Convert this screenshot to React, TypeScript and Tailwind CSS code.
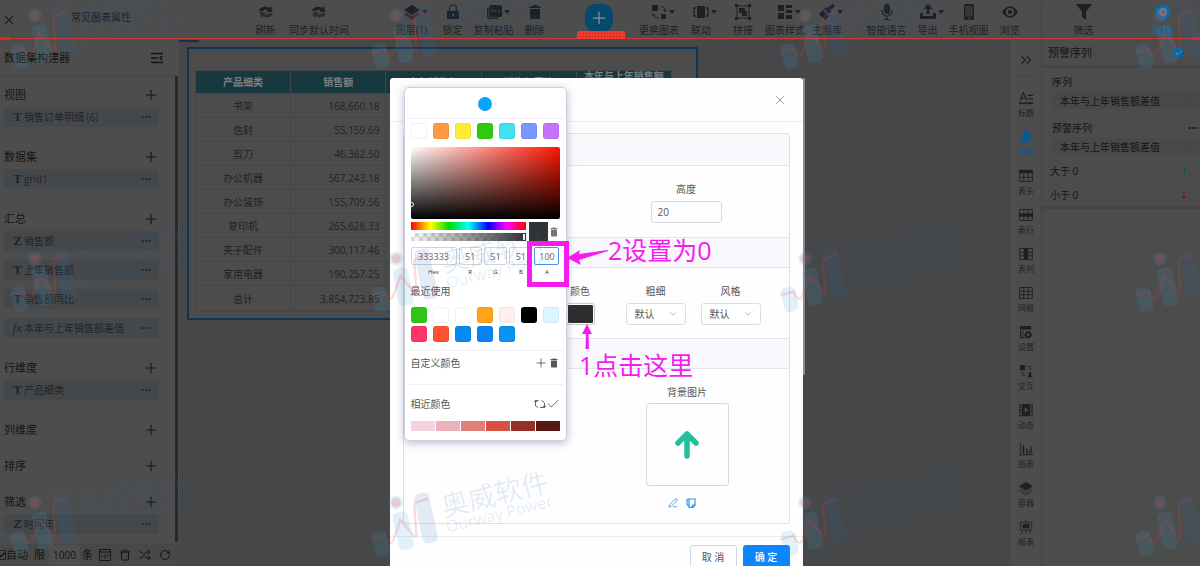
import { useState, type ReactNode } from "react";
import { Check, ChevronDown, ChevronsRight, PenLine, Plus, RotateCw, Shuffle, Trash, X } from "lucide-react";
import { MdDelete } from "react-icons/md";

type IconName =
  | "sync" | "layers" | "lock" | "copy" | "trash" | "swap" | "link" | "join" | "grid" | "brush"
  | "mic" | "export" | "phone" | "eye" | "filter" | "hex"
  | "title" | "bell" | "thead" | "trow" | "tcol" | "mesh" | "settings" | "interact" | "film" | "chart" | "stack" | "report";

// all glyphs are drawn on a 16 x 16 grid with currentColor
const GLYPHS: Record<IconName, ReactNode> = {
  sync: <><path d="M1 7a6 5 0 0 1 10-3l2-2 1.500 6H8l2-2a4 3 0 0 0-5 1z" /><path d="M15 9a6 5 0 0 1-10 3l-2 2L1.500 8H8l-2 2a4 3 0 0 0 5-1z" opacity=".7" /></>,
  layers: <><path d="M8 1l8 5-8 5-8-5z" /><path d="M2.500 9L8 12.500 13.500 9 16 10.500 8 15.500 0 10.500z" opacity=".7" /></>,
  lock: <><path d="M4.500 7V4.500a3.500 3.500 0 0 1 7 0V7" fill="none" stroke="currentColor" strokeWidth="1.200" /><path fillRule="evenodd" d="M2 7h12v8H2zM7.200 9.500v3h1.600v-3z" /></>,
  copy: <><path d="M1 4v9a2 2 0 0 0 2 2h9v-1.500H4A1.500 1.500 0 0 1 2.500 12V4z" /><path fillRule="evenodd" d="M5 1h9a2 2 0 0 1 2 2v8a2 2 0 0 1-2 2H5a2 2 0 0 1-2-2V3a2 2 0 0 1 2-2zm.5 5v1.500H7V6zm3.200 0v1.500h1.600V6zm3.300 0v1.500h1.500V6z" /></>,
  trash: <path d="M5.500 1h5v1.500H14V4H2V2.500h3.500zM3 5h10v10H3z" />,
  swap: <><path d="M1 1h6v6H1zM10 10h5v5h-5z" /><path d="M10 2.500c3 0 4 1.500 4 5M12.500 6L14 8l1.500-2M7.500 14C4 14 2.500 13 2.500 10M1 11.500L2.500 9.500 4 11.500" fill="none" stroke="currentColor" /></>,
  link: <><path d="M4 2h8v12H4z" /><path d="M3 4H1v8h2M13 4h2v8h-2" fill="none" stroke="currentColor" strokeWidth="1.300" /></>,
  join: <><path d="M2 2h12v12H2z" fill="none" stroke="currentColor" /><path d="M0 0h3v3H0zM13 0h3v3h-3zM0 13h3v3H0zM13 13h3v3h-3zM4 4h6v5H4zM7 7h5v5H7z" /></>,
  grid: <path d="M1 1h6v6H1zM1 9h6v6H1zM9 1h6v3H9zM9 6h6v3H9zM9 11h6v4H9z" />,
  brush: <path d="M14 0l2 2-5 5 1 1-2 2-5-5 2-2 1 1zM4 6l6 6-4 4-6-6z" />,
  mic: <><rect x="5" y="0" width="6" height="10" rx="3" /><path d="M3 6c0 8 10 8 10 0M8 12v3M5 15.500h6" fill="none" stroke="currentColor" strokeWidth="1.200" /></>,
  export: <><path d="M8 0l5 5H9.500v5h-3V5H3z" /><path d="M0 9h3v3h10V9h3v6H0z" /></>,
  phone: <><path fillRule="evenodd" d="M4.500 0h7A1.500 1.500 0 0 1 13 1.500v13a1.500 1.500 0 0 1-1.500 1.500h-7A1.500 1.500 0 0 1 3 14.500v-13A1.500 1.500 0 0 1 4.500 0zM4.500 2v10.500h7V2zM7 14v1h2v-1z" /><path d="M4.500 2h7v10.500h-7z" opacity=".5" /></>,
  eye: <path fillRule="evenodd" d="M0 8c4-7.500 12-7.500 16 0-4 7.500-12 7.500-16 0zm8-4a4 4 0 1 0 0 8 4 4 0 0 0 0-8zm0 1.800a2.200 2.200 0 1 1 0 4.400 2.200 2.200 0 0 1 0-4.400z" />,
  filter: <path d="M0 0h16l-6 8v8l-4-3V8z" />,
  hex: <><path d="M8 0l7 4v8l-7 4-7-4V4z" /><circle cx="8" cy="8" r="4" fill="#6d7f8c" /><circle cx="8" cy="8" r="2" fill="#8a4f56" /></>,
  title: <><path d="M1 11L5 2l4 9M2.500 8h5M10 5h6M10 9h6" fill="none" stroke="currentColor" strokeWidth="1.400" /><path d="M0 13h16v2H0z" /></>,
  bell: <><path d="M8 0l1 1.500c2 .5 3 2.500 3 5 0 3 1 4.500 3 6H1c2-1.500 3-3 3-6 0-2.500 1-4.500 3-5zM6.500 13.500h3c0 2-3 2-3 0z" /><path d="M2 2.500L.8 5M14 2.500L15.200 5" fill="none" stroke="currentColor" strokeWidth=".7" /></>,
  thead: <><path d="M0 1h16v4H0z" /><path d="M.7 5v9.300h14.600V5M5.500 5v9M10.500 5v9M1 9.500h14" fill="none" stroke="currentColor" strokeWidth="1" /></>,
  trow: <><path d="M0 6h16v4H0z" /><path d="M.7 1.700h14.600v12.600H.7zM5.500 1v13M10.500 1v13" fill="none" stroke="currentColor" strokeWidth="1" /></>,
  tcol: <><path d="M5.500 1h5v14h-5z" /><path d="M.7 1.700h14.600v12.600H.7zM1 6h14M1 10h14" fill="none" stroke="currentColor" strokeWidth="1" /></>,
  mesh: <path d="M.7 1.700h14.600v12.600H.7zM5.500 1v13M10.500 1v13M1 6h14M1 10h14" fill="none" stroke="currentColor" strokeWidth="1" />,
  settings: <><path d="M1 1h13v4H1zM1 6h1.500v9H1zM4 6h1v8h2v1H2v-1h2z" /><path fillRule="evenodd" d="M8.500 7h4l2.500 4-2.500 4h-4L6 11zm2 2.500a1.500 1.500 0 1 0 0 3 1.500 1.500 0 0 0 0-3z" /></>,
  interact: <><path d="M1 1h6v6H1zM12.500 9a2 2 0 0 1 1 3.500q2 .5 2 2.500h-6q0-2 2-2.500a2 2 0 0 1 1-3.500z" /><path d="M9 3h4v4M11.500 5.500L13 7l1.500-1.500M7.500 13h-4V9.500M2 11l1.500-1.500L5 11" fill="none" stroke="currentColor" strokeWidth=".8" /></>,
  film: <><path fillRule="evenodd" d="M3 1h10v14H3zM6.500 5v6l4.500-3z" /><path d="M1 1v14M15 1v14" fill="none" stroke="currentColor" strokeWidth="2" strokeDasharray="2 1" /></>,
  chart: <path d="M1 0h1v14h14v1H1v1H0v-1h1zM4 4h2v9H4zM8 7h1.500v6H8zM11 9h1v4h-1zM13 5h1.500v8H13z" />,
  stack: <><path d="M8 1l8 5-8 5-8-5z" /><path d="M1 9l7 4.500L15 9M1 11.500L8 16l7-4.500" fill="none" stroke="currentColor" strokeWidth=".8" /></>,
  report: <><path d="M1.500 2.500h13v9h-13zM4 12l-1 4M12 12l1 4M8 12v4M8 0v2" fill="none" stroke="currentColor" /><path d="M4 4.500h8v5H4z" /></>,
};

function Glyph({ name, className }: { name: IconName; className: string }) {
  return <svg viewBox="0 0 16 16" fill="currentColor" className={className} aria-hidden="true">{GLYPHS[name]}</svg>;
}

interface Tool { label: string; icon: IconName; caret?: boolean; active?: boolean }

const FILE_TOOLS: Tool[] = [{ label: "刷新", icon: "sync" }, { label: "同步默认时间", icon: "sync" }];
const EDIT_TOOLS: Tool[] = [
  { label: "图层(1)", icon: "layers", caret: true },
  { label: "锁定", icon: "lock" },
  { label: "复制粘贴", icon: "copy", caret: true },
  { label: "删除", icon: "trash" },
];
const CHART_TOOLS: Tool[] = [
  { label: "更换图表", icon: "swap", caret: true },
  { label: "联动", icon: "link", caret: true },
  { label: "拼接", icon: "join" },
  { label: "图表样式", icon: "grid", caret: true },
  { label: "主题库", icon: "brush", caret: true },
];
const VIEW_TOOLS: Tool[] = [
  { label: "智能语言", icon: "mic" },
  { label: "导出", icon: "export", caret: true },
  { label: "手机视图", icon: "phone" },
  { label: "浏览", icon: "eye" },
];

const SECTIONS: { title: string; items: { mark: string; name: string }[] }[] = [
  { title: "视图", items: [{ mark: "T", name: "销售订单明细 (6)" }] },
  { title: "数据集", items: [{ mark: "T", name: "grid1" }] },
  {
    title: "汇总",
    items: [
      { mark: "Z", name: "销售额" },
      { mark: "T", name: "上年销售额" },
      { mark: "T", name: "销售额同比" },
      { mark: "fx", name: "本年与上年销售额差值" },
    ],
  },
  { title: "行维度", items: [{ mark: "T", name: "产品细类" }] },
  { title: "列维度", items: [] },
  { title: "排序", items: [] },
  { title: "筛选", items: [{ mark: "Z", name: "时间年" }] },
];

const ROWS = [
  ["书架", "168,660.18"],
  ["信封", "55,159.69"],
  ["剪刀", "46,362.50"],
  ["办公机器", "567,243.18"],
  ["办公装饰", "155,709.56"],
  ["复印机", "265,628.33"],
  ["夹子配件", "300,117.46"],
  ["家用电器", "190,257.25"],
];

const RAIL: { label: string; icon: IconName }[] = [
  { label: "标题", icon: "title" },
  { label: "预警", icon: "bell" },
  { label: "表头", icon: "thead" },
  { label: "表行", icon: "trow" },
  { label: "表列", icon: "tcol" },
  { label: "网格", icon: "mesh" },
  { label: "设置", icon: "settings" },
  { label: "交互", icon: "interact" },
  { label: "动态", icon: "film" },
  { label: "图表", icon: "chart" },
  { label: "容器", icon: "stack" },
  { label: "报表", icon: "report" },
];

const PRESETS = ["#ffffff", "#ff9a43", "#ffeb33", "#30c90e", "#43e0f0", "#7a95ff", "#c573ff"];
const RECENT = ["#30c516", "#ffffff", "#ffffff", "#ffa31a", "#fff1ec", "#000000", "#dcf5ff", "#ff3366", "#ff5230", "#078af0", "#0784f4", "#0894f0"];
const SIMILAR = ["#f3d3e2", "#ebb2bc", "#e07f79", "#d84f45", "#963129", "#561a15"];

function ToolButton({ tool, width = "w-[41px]" }: { tool: Tool; width?: string }) {
  return (
    <button className={`flex flex-col items-center gap-1 whitespace-nowrap ${width} ${tool.active ? "text-[#036db5]" : "text-[#1d2126]"}`}>
      <span className="relative">
        <Glyph name={tool.icon} className="size-4" />
        {tool.caret && <span className="absolute -right-2 top-1.5 border-x-[3px] border-t-4 border-x-transparent border-t-current" />}
      </span>
      <span className="text-[10px] leading-3">{tool.label}</span>
    </button>
  );
}

function ToolGroup({ tools, className, width }: { tools: Tool[]; className: string; width?: string }) {
  return <div className={`flex shrink-0 ${className}`}>{tools.map((t) => <ToolButton key={t.label} tool={t} width={width} />)}</div>;
}

function Toolbar() {
  return (
    <header className="relative flex h-10 shrink-0 items-start bg-[#4d4d4d] pt-1 text-[#1d2126]">
      <button aria-label="关闭" className="ml-px mt-2"><X className="size-4" strokeWidth={1.800} /></button>
      <span className="ml-[54px] mt-1.5 w-[174px] text-[10px] leading-3.5">常见图表属性</span>
      <div className="flex w-[104px] shrink-0 justify-between">
        <ToolButton tool={FILE_TOOLS[0]} />
        <ToolButton tool={FILE_TOOLS[1]} width="w-[60px]" />
      </div>
      <ToolGroup tools={EDIT_TOOLS} className="ml-[42px]" />
      <button aria-label="添加" className="ml-[30px] flex size-7 shrink-0 items-center justify-center rounded-[10px] bg-[#06496e] text-[#858e94]">
        <Plus className="size-5" strokeWidth={1.500} />
      </button>
      <ToolGroup tools={CHART_TOOLS} className="ml-[25px]" width="w-[42px]" />
      <ToolGroup tools={VIEW_TOOLS} className="ml-[18px]" />
      <div className="ml-auto flex shrink-0 border-l border-[#414141]">
        <ToolButton tool={{ label: "筛选", icon: "filter" }} width="w-[83px]" />
        <ToolButton tool={{ label: "属性", icon: "hex", active: true }} width="w-[75px]" />
      </div>
      <div className="absolute inset-x-0 bottom-0 flex h-[3px] items-center justify-between">
        <span className="h-[3px] w-2.5 bg-[#f5220b]" />
        <span className="h-px flex-1 bg-[#c93a33]" />
        <span className="h-[3px] w-2 bg-[#f5220b]" />
      </div>
      <svg viewBox="0 0 48 8" className="absolute bottom-px left-1/2 -ml-[23px] h-2 w-12" aria-hidden="true">
        <rect width="48" height="10" rx="2" fill="#ee3b30" />
        <path d="M3 2.500h42M3 5.500h42" stroke="#b32620" strokeDasharray="1 2" />
      </svg>
    </header>
  );
}

function Builder() {
  return (
    <aside className="flex w-[179px] shrink-0 flex-col bg-[#4d4d4d] text-[#151515]">
      <div className="flex h-9 shrink-0 items-center justify-between border-b border-[#454545] pl-1 pr-4">
        <h2 className="text-[11px] leading-4">数据集构建器</h2>
        <button aria-label="收起">
          <svg viewBox="0 0 12 12" className="size-3" fill="none" stroke="currentColor" strokeWidth="1.400">
            <path d="M0 1.500h12M0 6h6.500M0 10.500h12M11.500 3.800L9 6l2.500 2.300" />
          </svg>
        </button>
      </div>
      <div className="mr-px flex-1 border-r-[3px] border-[#292929] pl-1 pr-4 pt-1.5">
        {SECTIONS.map((s) => (
          <section key={s.title} className="pb-[11px] last:pb-0">
            <div className="flex h-[25px] items-center justify-between">
              <h3 className="text-[11px] leading-4">{s.title}</h3>
              <button aria-label={`添加${s.title}`}><Plus className="size-4" strokeWidth={1.600} /></button>
            </div>
            {s.items.length > 0 && (
              <ul className="flex flex-col gap-[9px] pb-1.5">
                {s.items.map((i) => (
                  <li key={i.name} className="flex h-5 items-center rounded-xs bg-[#45484b] pr-2 text-[10px] leading-4 text-[#20242a]">
                    <span className={`mr-0.5 w-[18px] text-right font-["Liberation_Serif",serif] text-[13px] ${i.mark === "fx" ? "italic" : "font-bold"}`}>{i.mark}</span>
                    <span className="flex-1 whitespace-nowrap">{i.name}</span>
                    <button aria-label={`${i.name}更多`} className="text-xs font-bold">···</button>
                  </li>
                ))}
              </ul>
            )}
          </section>
        ))}
      </div>
      <div className="mt-0.5 flex h-[22px] shrink-0 items-center bg-[#484848] text-[11px] leading-4">
        <label className="flex items-center whitespace-nowrap">
          <input type="checkbox" defaultChecked className="-ml-1 size-2.5 appearance-none border border-[#222]" />
          <Check className="-ml-2 size-2" strokeWidth={4} />自动
        </label>
        <label htmlFor="limit" className="ml-1.5">限</label>
        <input id="limit" defaultValue="1000" className="ml-1 h-5 w-[31px] bg-[#4f4f4f] text-center text-[10px]" />
        <span className="ml-0.5">条</span>
        <div className="ml-1.5 flex flex-1 items-center justify-between pr-2">
          <button aria-label="代码">
            <svg viewBox="0 0 12 12" className="size-3" fill="none" stroke="currentColor"><path d="M.5.5h11v11H.5zM.5 3h11M4 5.500L2.500 7 4 8.500M8 5.500L9.500 7 8 8.500M6.500 5l-1 4.500" /></svg>
          </button>
          <button aria-label="清空"><Trash className="size-3" /></button>
          <button aria-label="随机"><Shuffle className="size-3" /></button>
          <button aria-label="重做"><RotateCw className="size-3" /></button>
        </div>
      </div>
    </aside>
  );
}

function ReportTable() {
  const cell = "border border-[#444546] p-0";
  return (
    <main className="min-w-0 flex-1 bg-[#464749]">
      <div className="h-0.5 w-5 bg-[#0a3354]" />
      <div className="ml-2 mt-[5px] w-[511px] border-2 border-[#0a3556] bg-[#4d4c4c] pb-1.5 pl-1.5 pr-6 pt-[21px]">
        <table className="w-full table-fixed border-collapse text-[10px] leading-3 text-[#222]">
          <thead>
            <tr className="bg-[#17383f] leading-[11px] text-[#788084]">
              <th className={cell}>产品细类</th>
              <th className={cell}>销售额</th>
              <th className={cell}>上年销售额</th>
              <th className={cell}>销售额同比</th>
              <th className={cell}>本年与上年销售额<br />差值</th>
            </tr>
          </thead>
          <tbody>
            {ROWS.map(([name, value]) => (
              <tr key={name} className="h-6">
                <td className={`${cell} text-center`}>{name}</td>
                <td className={cell}><div className="pr-1.5 text-right">{value}</div></td>
                <td className={cell} /><td className={cell} /><td className={cell} />
              </tr>
            ))}
            <tr className="h-[26px]">
              <td className={`${cell} text-center`}>总计</td>
              <td className={cell}><div className="pr-1.5 text-right">3,854,723.85</div></td>
              <td className={cell} /><td className={cell} /><td className={cell} />
            </tr>
          </tbody>
        </table>
      </div>
    </main>
  );
}

function Rail() {
  return (
    <nav className="flex w-[30px] shrink-0 flex-col items-center bg-[#4d4d4d] text-[#1d2126]">
      <button aria-label="展开" className="flex h-[37px] w-5 items-center justify-center border-b border-[#444] pt-1"><ChevronsRight className="size-[18px]" strokeWidth={1.500} /></button>
      <div className="pt-3.5">
        {RAIL.map((r) => (
          <button key={r.label} className={`flex h-[39px] flex-col items-center gap-0.5 ${r.icon === "bell" ? "text-[#045a94]" : ""}`}>
            <Glyph name={r.icon} className="size-3.5" />
            <span className="text-[8px] leading-3">{r.label}</span>
          </button>
        ))}
      </div>
    </nav>
  );
}

function SeriesSelect({ id }: { id: string }) {
  return (
    <div className="relative">
      <select id={id} className="h-[17px] w-full appearance-none bg-[#494949] pl-2 text-[10px] leading-4">
        <option>本年与上年销售额差值</option>
      </select>
      <ChevronDown className="pointer-events-none absolute right-2 top-1 size-2.5 text-[#353535]" strokeWidth={1.500} />
    </div>
  );
}

function Properties() {
  return (
    <aside className="w-[159px] shrink-0 border-l border-[#424242] bg-[#4c4c4c] text-[#151515]">
      <div className="flex h-7 items-center border-b-[3px] border-[#454545] pl-1.5">
        <label htmlFor="alert-on" className="flex-1 text-[11px] leading-4">预警序列</label>
        <span className="relative flex">
          <input id="alert-on" type="checkbox" defaultChecked className="size-2.5 appearance-none rounded-xs bg-[#04639f]" />
          <Check className="pointer-events-none absolute left-px top-px size-2 text-[#8d979d]" strokeWidth={3} />
        </span>
        <ChevronDown className="ml-1 size-3 text-[#04639f]" />
      </div>
      <div className="border-b-[3px] border-[#444] pb-[3px] text-[10px] leading-4">
        <div className="pl-2.5 pt-1.5">
          <label htmlFor="series" className="block pb-0.5">序列</label>
          <SeriesSelect id="series" />
        </div>
        <div className="pl-2.5 pt-[11px]">
          <div className="flex justify-between pb-0.5 pr-0.5">
            <label htmlFor="alert-series">预警序列</label>
            <button aria-label="更多" className="text-xs font-bold leading-4">···</button>
          </div>
          <SeriesSelect id="alert-series" />
        </div>
        <div className="flex justify-between pl-2 pr-3 pt-2"><span>大于 0</span><span className="text-[8px] font-bold text-[#035c30]">↑</span></div>
        <div className="flex justify-between pl-2 pr-3 pt-2"><span>小于 0</span><span className="text-[8px] font-bold text-[#6b0f1a]">↓</span></div>
      </div>
    </aside>
  );
}

function Swatches({ colors }: { colors: string[] }) {
  return (
    <div className="grid grid-cols-7 gap-x-1.5 gap-y-[3px]">
      {colors.map((c, i) => (
        <button key={i} aria-label={c} className="h-4 rounded-[3px] border border-black/5" style={{ backgroundColor: c }} />
      ))}
    </div>
  );
}

function ColorPicker() {
  const [alpha, setAlpha] = useState("100");
  const field = "h-[18px] w-full rounded-xs border border-[#d2d2d8] bg-transparent text-center text-[9px] text-[#666]";
  const caption = "block text-center text-[6px] leading-[14px] text-[#333]";
  return (
    <div className="absolute left-3.5 top-[9px] w-[163px] rounded-[5px] border border-[#cfcfdb] bg-white px-1.5 text-[10px] leading-4 text-[#555] shadow-[0_2px_8px_rgba(60,60,110,0.35)]">
      <div className="-mx-1 flex h-[31px] items-center justify-center border-b border-[#f0f0f6]">
        <span className="mt-0.5 size-3.5 rounded-full bg-[#07a5ff]" />
      </div>
      <div className="pt-1"><Swatches colors={PRESETS} /></div>
      <div className="relative mt-2 h-[72px] rounded-xs bg-[linear-gradient(to_top,#000,transparent),linear-gradient(to_right,#fff,#ff1500)]">
        <span className="absolute -left-0.5 bottom-3 size-[5px] rounded-full border border-white" />
      </div>
      <div className="mt-[3px] flex items-center">
        <div className="flex flex-1 flex-col gap-[3px]">
          <div className="h-2 bg-[linear-gradient(to_right,#f00,#ff0_17%,#0d0_33%,#0ff_50%,#00f_67%,#f0f_83%,#f00)]" />
          <div className="relative h-2 bg-[linear-gradient(to_right,transparent,#333),repeating-conic-gradient(#ddd_0_25%,#fff_0_50%)] bg-[length:100%_100%,8px_8px]">
            <span className="absolute right-0 top-0 h-2 w-1 border border-[#333] bg-white" />
          </div>
        </div>
        <span className="ml-[3px] size-[19px] bg-[#303234]" />
        <button aria-label="清除颜色"><MdDelete className="size-3 text-[#73777c]" /></button>
      </div>
      <div className="mt-1.5 flex gap-0.5">
        <label className="w-[46px]"><input defaultValue="333333" className={field} /><span className={caption}>Hex</span></label>
        <label className="flex-1"><input defaultValue="51" className={field} /><span className={caption}>R</span></label>
        <label className="flex-1"><input defaultValue="51" className={field} /><span className={caption}>G</span></label>
        <label className="flex-1"><input defaultValue="51" className={field} /><span className={caption}>B</span></label>
        <label className="w-[25px]">
          <input value={alpha} onChange={(e) => setAlpha(e.target.value)} className="h-[18px] w-full rounded-xs border border-[#4d90e8] bg-transparent text-center text-[9px] text-[#666]" />
          <span className={caption}>A</span>
        </label>
      </div>
      <h4 className="mt-1 pb-2">最近使用</h4>
      <Swatches colors={RECENT} />
      <div className="-mx-1 mt-2 flex h-[35px] items-start border-y border-[#f0f0f6] px-1 pt-1">
        <h4 className="flex-1">自定义颜色</h4>
        <button aria-label="添加颜色"><Plus className="mt-px size-3.5" strokeWidth={1.500} /></button>
        <button aria-label="删除颜色"><MdDelete className="mt-0.5 size-3 text-[#555]" /></button>
      </div>
      <div className="flex items-center pt-[11px]">
        <h4 className="flex-1">相近颜色</h4>
        <button aria-label="换一批">
          <svg viewBox="0 0 12 12" className="size-3" fill="none" stroke="currentColor" strokeWidth=".9"><path d="M4.500 2.500H1.500v5.500l2.500 1.500M6 9.500h4.500V5L7.500 2.500M0 4.200L1.500 2.500 3.200 4.200M9 7.800l1.500 1.700L12 7.800" /></svg>
        </button>
        <button aria-label="应用"><Check className="size-3.5" strokeWidth={1.500} /></button>
      </div>
      <div className="mb-[9px] mt-[9px] flex h-2.5 gap-px">
        {SIMILAR.map((c) => <button key={c} aria-label={c} className="flex-1" style={{ backgroundColor: c }} />)}
      </div>
    </div>
  );
}

function LineSelect({ label }: { label: string }) {
  return (
    <label className="relative flex w-[60px] flex-col items-center gap-1 self-start">
      {label}
      <select className="h-[22px] w-full appearance-none rounded-[3px] border border-[#dcdce6] bg-white pl-2 text-[10px]">
        <option>默认</option>
      </select>
      <ChevronDown className="pointer-events-none absolute bottom-1.5 right-2 size-2.5 text-[#888]" strokeWidth={1.500} />
    </label>
  );
}

function StyleDialog() {
  const band = "border-y border-[#e4e4ef] bg-[#f8f8fd]";
  return (
    <div className="absolute inset-0 flex items-start justify-center overflow-hidden pr-2 pt-[78px]">
      <div role="dialog" aria-label="样式设置" className="relative w-[413px] rounded-t-[3px] bg-[#fefeff] text-[10px] leading-4 text-[#555]">
        <span className="absolute -right-0.5 top-0 h-[297px] w-0.5 rounded-full bg-[#8a8b8d]" />
        <div className="flex h-11 items-center justify-end border-b border-[#ececf4] pr-4">
          <button aria-label="关闭"><X className="size-3.5 text-[#888]" strokeWidth={1.500} /></button>
        </div>
        <div className="mx-[13px] mt-[11px] overflow-hidden rounded-[3px] border border-[#dedeeb]">
          <div className="h-8 border-b border-[#e4e4ef] bg-[#f8f8fd]" />
          <div className="flex h-[71px] justify-end pr-[67px] pt-[15px]">
            <label className="flex w-[71px] flex-col items-center gap-1">
              高度
              <input defaultValue="20" className="h-[22px] w-full rounded-[3px] border border-[#dcdce6] px-1.5 text-[10px]" />
            </label>
          </div>
          <div className={`h-[31px] ${band}`} />
          <div className="flex h-[70px] justify-end gap-[15px] pr-7 pt-[15px]">
            <div className="mr-4 flex flex-col items-center gap-1">
              颜色
              <button aria-label="颜色" className="h-[22px] w-[29px] rounded-[3px] border border-[#c8c8cc] bg-[#2c2d2e] bg-clip-content p-px" />
            </div>
            <LineSelect label="粗细" />
            <LineSelect label="风格" />
          </div>
          <div className={`h-[31px] ${band}`} />
          <div className="flex h-[154px] justify-end pr-[60px] pt-[15px]">
            <div className="flex flex-col items-center">
              背景图片
              <button aria-label="背景图片" className="mt-[3px] flex size-[83px] items-center justify-center rounded-[3px] border border-[#d6d6e4]">
                <svg viewBox="0 0 24 28" className="h-7 w-6" fill="none" stroke="#22bf9d" strokeWidth="5.500" strokeLinecap="round" strokeLinejoin="round"><path d="M12 25V4M3 12l9-9 9 9" /></svg>
              </button>
              <div className="mt-3 flex gap-2 self-start pl-[22px] text-[#3195ef]">
                <button aria-label="编辑"><PenLine className="size-2.5" /></button>
                <button aria-label="复制">
                  <svg viewBox="0 0 10 10" className="size-2.5" fill="none" stroke="currentColor" strokeWidth="1.200"><path d="M3 1h6v6.500L7 9.400H3zM1 1v6M1 1h2M3 7.200H1M6.500 9.200V7H9" /></svg>
                </button>
              </div>
            </div>
          </div>
        </div>
        <div className="mt-3 flex justify-end gap-1.5 border-t border-[#ececf4] px-[13px] pb-3 pt-2">
          <button className="h-[23px] w-[47px] rounded-[3px] border border-[#d6d6e0]">取 消</button>
          <button className="h-[23px] w-[47px] rounded-[3px] bg-[#0b86fb] font-medium text-white">确 定</button>
        </div>
        <ColorPicker />
      </div>
    </div>
  );
}

function Brand({ className }: { className: string }) {
  return (
    <svg viewBox="30 110 570 276" className={`absolute h-[92px] w-[190px] ${className}`} aria-hidden="true">
      <g fill="#3aa4d6" fillOpacity=".14">
        <rect x="40" y="305" width="44" height="74" rx="14" transform="rotate(-14 62 342)" />
        <rect x="107" y="247" width="46" height="114" rx="14" transform="rotate(-12 130 304)" />
        <circle cx="108" cy="220" r="21" />
      </g>
      <rect x="175" y="190" width="46" height="152" rx="15" fill="#2a70b4" fillOpacity=".13" transform="rotate(-12 198 266)" />
      <circle cx="108" cy="220" r="14" fill="#f03c3c" fillOpacity=".2" />
      <path d="M35 330l40-11q8 25 20 20 6-4 26-68l30 36q18 25 18 10l-6-90q0-10 42-19" fill="none" stroke="#f03c3c" strokeOpacity=".18" strokeWidth="7" />
      <g fill="#1464b4" fillOpacity=".12" transform="rotate(-14 258 268)">
        <text x="254" y="262" fontSize="82">奥威软件</text>
        <text x="252" y="310" fontSize="48">Ourway Power</text>
      </g>
    </svg>
  );
}

function Watermark() {
  return (
    <div className="pointer-events-none absolute inset-0 overflow-hidden">
      {["-top-[21px]", "top-[222px]", "top-[466px]"].map((top) => (
        <div key={top} className={`absolute inset-x-0 ${top}`}>
          <Brand className="left-[9px]" />
          <Brand className="left-[370px]" />
          <Brand className="left-[779px]" />
          <Brand className="left-[1134px]" />
        </div>
      ))}
    </div>
  );
}

// numbered steps drawn over the dialog, anchored to the window centre like the dialog itself
function Annotations() {
  return (
    <div className="pointer-events-none absolute left-1/2 top-0 text-[25px] leading-8 text-[#f51cf0]">
      <div className="absolute -left-[73px] top-[241px] h-[46px] w-[42px] border-[5px] border-[#f51cf0]" />
      <svg viewBox="0 0 42 18" className="absolute -left-[33px] top-[248px] h-[18px] w-[42px]" fill="currentColor" aria-hidden="true">
        <path d="M0 10L13 2l-1 4 29-4v1L12 12l2 5z" />
      </svg>
      <p className="absolute left-2 top-[234px] whitespace-nowrap">2设置为0</p>
      <svg viewBox="0 0 10 26" className="absolute -left-[18px] top-[324px] h-[26px] w-2.5" fill="currentColor" aria-hidden="true">
        <path d="M5 0l5 10H6.500l.5 15H3.500L4 10H0z" />
      </svg>
      <p className="absolute -left-[21px] top-[349px] whitespace-nowrap">1点击这里</p>
    </div>
  );
}

export default function App() {
  return (
    <div className='relative flex min-h-screen flex-col overflow-hidden bg-[#464749] font-["Open_Sans","Noto_Sans_CJK_SC",sans-serif]'>
      <Toolbar />
      <div className="flex flex-1">
        <Builder />
        <ReportTable />
        <Rail />
        <Properties />
      </div>
      <StyleDialog />
      <Watermark />
      <Annotations />
    </div>
  );
}
